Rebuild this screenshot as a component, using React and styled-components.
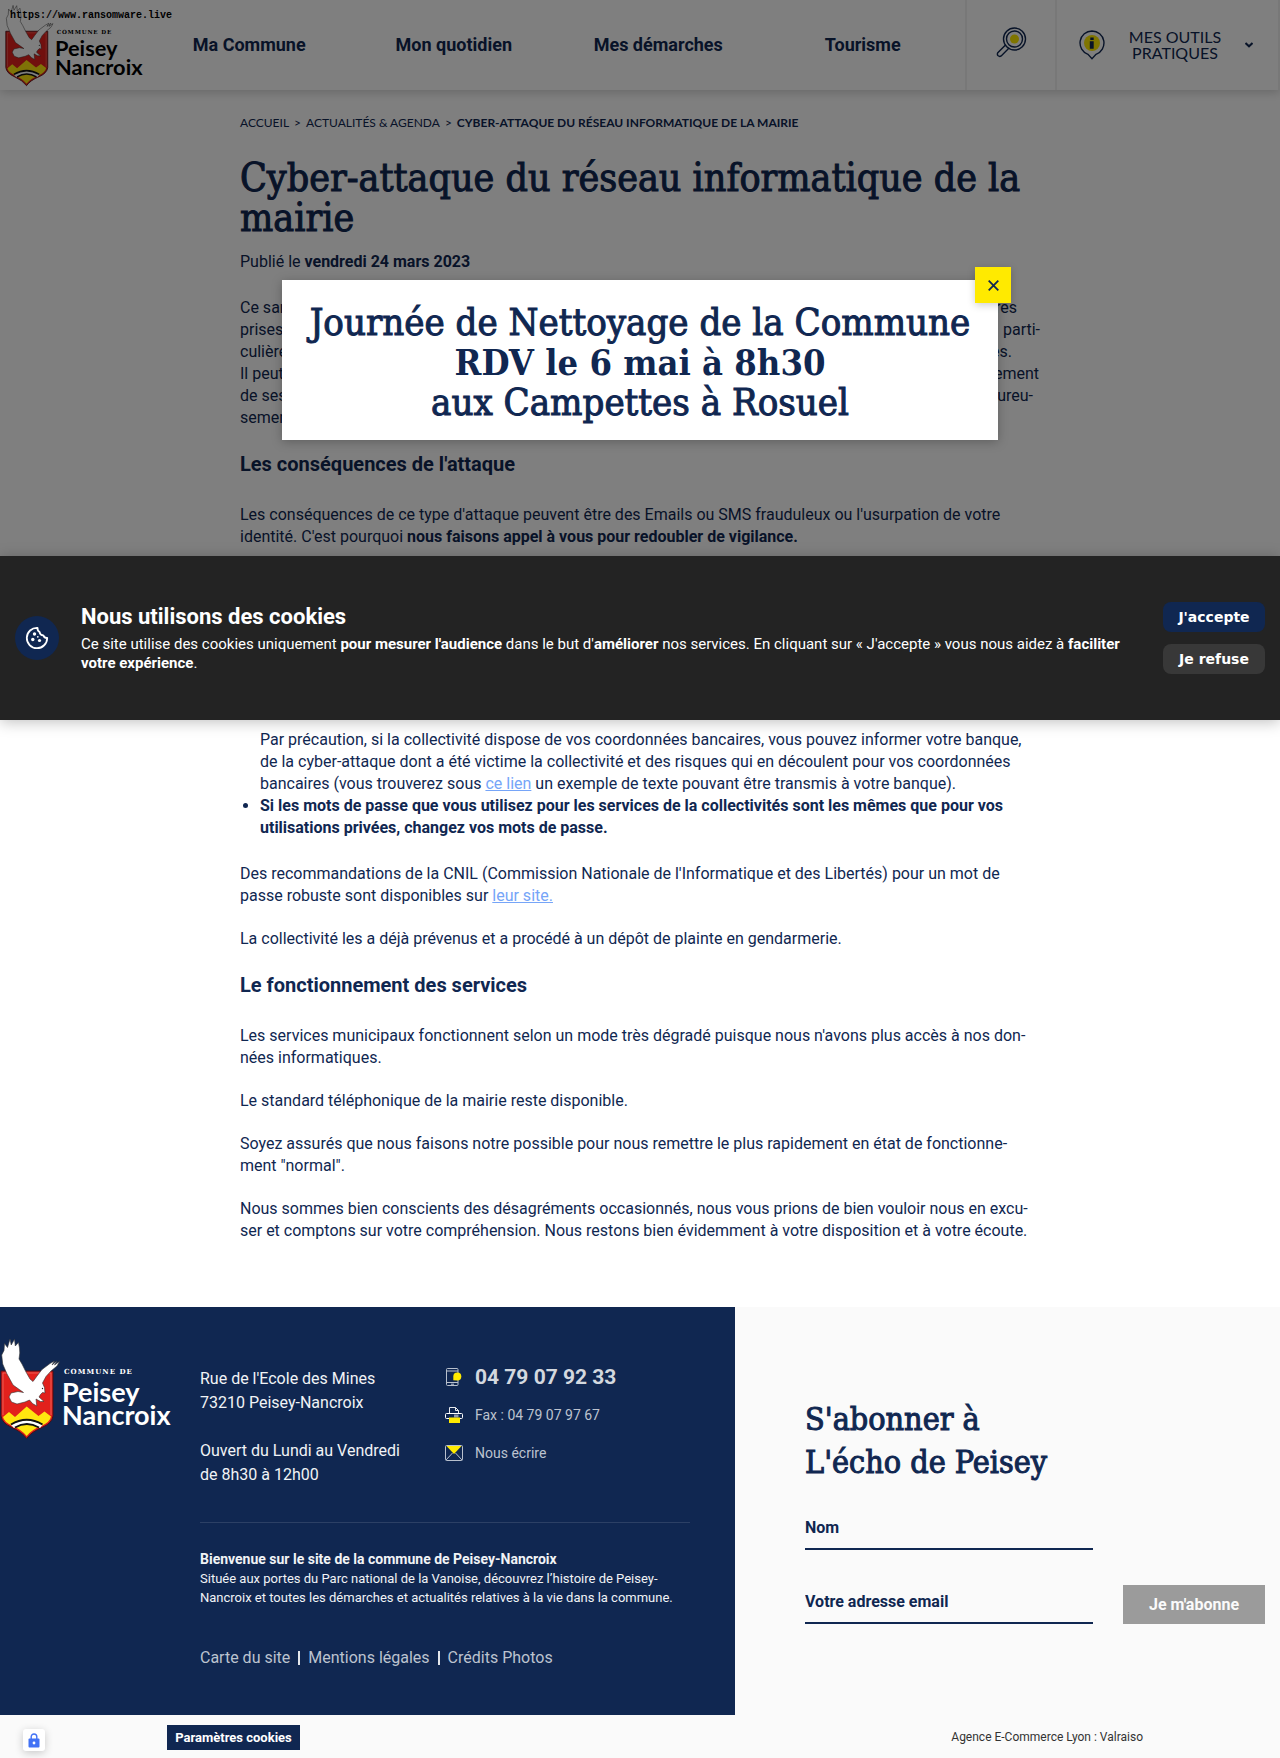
import React from "react";
import styled, { createGlobalStyle } from "styled-components";

const navy = "#102751";
const yellow = "#ffea00";
const sans = `Roboto, "Liberation Sans", sans-serif`;
const caps = `Lato, "Liberation Sans", sans-serif`;
const slab = `"DejaVu Serif Condensed", "DejaVu Serif", serif`;

const GlobalStyle = createGlobalStyle`
  *, *::before, *::after { box-sizing: border-box; }
  body {
    margin: 0;
    background: #fff;
    color: ${navy};
    font-family: ${sans};
    font-size: 16px;
    line-height: 22px;
  }
  h1, h2, h3, p, ul { margin: 0; padding: 0; }
  button, input { font-family: inherit; border: 0; margin: 0; padding: 0; }
  button { cursor: pointer; }
  a { color: inherit; text-decoration: none; }
`;

const Page = styled.div`
  position: relative;
`;

/* Header */

const Header = styled.header`
  display: flex;
  height: 90px;
  background: #fff;
  box-shadow: 0 2px 10px rgba(0, 0, 0, 0.2);
`;

const Brand = styled.a`
  flex: 0 0 145px;
  padding: 3px 0 0 5px;
`;

const Nav = styled.nav`
  flex: 1;
  display: grid;
  grid-template-columns: repeat(4, 1fr);
`;

const NavLink = styled.a`
  display: flex;
  align-items: center;
  justify-content: center;
  font-size: 18px;
  font-weight: 700;
`;

const SearchButton = styled.button`
  width: 90px;
  display: flex;
  align-items: center;
  justify-content: center;
  background: none;
  border-left: 2px solid #f0f0f0;
  padding-bottom: 6px;
`;

const ToolsButton = styled.button`
  width: 225px;
  display: flex;
  align-items: center;
  justify-content: space-between;
  padding: 0 25px 0 22px;
  background: none;
  border-left: 2px solid #f0f0f0;
  border-right: 2px solid #f0f0f0;
  color: ${navy};
  font-family: ${caps};
  font-size: 16px;
  line-height: 16px;
`;

/* Article */

const Article = styled.main`
  max-width: 800px;
  margin: 0 auto;
  padding: 25px 0 65px;
`;

const Breadcrumb = styled.nav`
  display: flex;
  gap: 5px;
  font-family: ${caps};
  font-size: 12px;
  line-height: 16px;
`;

const Title = styled.h1`
  margin-top: 27px;
  font-family: ${slab};
  font-size: 39px;
  font-weight: 400;
  line-height: 40px;
  -webkit-text-stroke: 1px currentColor;
`;

const Published = styled.p`
  margin: 13px 0 24px;
`;

const Paragraph = styled.p`
  & + & { margin-top: 21px; }
  ul + & { margin-top: 24px; }
`;

const SplitLine = styled.span`
  display: flex;
  justify-content: space-between;
  max-width: ${(p) => p.$width}px;
`;

const Heading = styled.h3`
  margin: 21px 0 26px;
  font-size: 20px;
  font-weight: 700;
  line-height: 28px;
`;

const List = styled.ul`
  margin-top: 181px;
  padding-left: 20px;
`;

const Item = styled.li`
  list-style: ${(p) => (p.$plain ? "none" : "disc")};
`;

const TextLink = styled.a`
  color: #76a5f8;
  text-decoration: underline;
`;

/* Footer */

const Footer = styled.footer`
  background: #fafafa;
`;

const FooterMain = styled.div`
  display: grid;
  grid-template-columns: minmax(0, 735fr) minmax(0, 545fr);
`;

const About = styled.section`
  display: flex;
  background: ${navy};
  color: #f1f3f6;
  padding: 29px 45px 0 0;
`;

const FooterBrand = styled.a`
  flex: 0 0 200px;
`;

const AboutBody = styled.div`
  flex: 1;
  padding: 22px 0 46px;
`;

const Contact = styled.div`
  display: grid;
  grid-template-columns: 245px 1fr;
  padding-bottom: 35px;
  border-bottom: 1px solid #2c4065;
`;

const Address = styled.p`
  padding-top: 9px;
  line-height: 24px;
`;

const ContactList = styled.div`
  display: flex;
  flex-direction: column;
`;

const ContactLink = styled.a`
  height: 38px;
  display: flex;
  align-items: center;
  gap: 12px;
  color: ${(p) => (p.$strong ? "#d3d8df" : "#bcc3cf")};
  font-size: ${(p) => (p.$strong ? 21 : 14)}px;
  font-weight: ${(p) => (p.$strong ? 700 : 400)};
`;

const Welcome = styled.p`
  margin-top: 26px;
  font-size: 13px;
  line-height: 19px;
`;

const WelcomeTitle = styled.strong`
  display: block;
  font-size: 14px;
  line-height: 20px;
`;

const LegalLinks = styled.nav`
  display: flex;
  align-items: center;
  gap: 8px;
  margin-top: 40px;
  color: #bcc3cf;
`;

const Divider = styled.span`
  width: 2px;
  height: 14px;
  background: #e3e6eb;
`;

const Newsletter = styled.section`
  padding: 91px 15px 0 70px;
`;

const NewsletterTitle = styled.h2`
  font-family: ${slab};
  font-size: 32px;
  font-weight: 400;
  line-height: 43px;
  -webkit-text-stroke: 1px currentColor;
`;

const Form = styled.form`
  display: flex;
  align-items: flex-end;
  gap: 30px;
  margin-top: 26px;
`;

const Fields = styled.div`
  flex: 1;
  display: flex;
  flex-direction: column;
  gap: 34px;
`;

const Field = styled.input`
  width: 100%;
  height: 40px;
  padding-bottom: 4px;
  background: none;
  border-bottom: 2px solid ${navy};
  color: ${navy};
  font-size: 16px;
  font-weight: 700;
  &::placeholder { color: ${navy}; opacity: 1; }
`;

const Subscribe = styled.button`
  width: 142px;
  height: 39px;
  background: #9b9b9b;
  color: #fafafa;
  font-size: 16px;
  font-weight: 700;
`;

const BottomBar = styled.div`
  position: relative;
  display: flex;
  align-items: center;
  justify-content: space-between;
  height: 44px;
  padding: 0 137px 0 167px;
  color: #333;
  font-size: 12px;
`;

const CookieSettings = styled.button`
  width: 133px;
  height: 25px;
  background: ${navy};
  color: #fff;
  font-size: 13px;
  font-weight: 700;
`;

const LockBadge = styled.button`
  position: absolute;
  left: 23px;
  bottom: 8px;
  width: 22px;
  height: 22px;
  display: flex;
  align-items: center;
  justify-content: center;
  border-radius: 3px;
  background: #fff;
  box-shadow: 0 2px 8px rgba(0, 0, 0, 0.2);
`;

/* Layers over the page */

const Overlay = styled.div`
  position: absolute;
  top: 0;
  left: 0;
  right: 0;
  height: 720px;
  display: flex;
  align-items: center;
  justify-content: center;
  background: rgba(0, 0, 0, 0.5);
`;

const Modal = styled.section`
  position: relative;
  width: 716px;
  max-width: 90%;
  padding: 22px 0 18px;
  background: #fff;
  box-shadow: 0 2px 10px rgba(0, 0, 0, 0.25);
  text-align: center;
`;

const ModalText = styled.h2`
  font-family: ${slab};
  font-size: 38px;
  font-weight: 400;
  line-height: 40px;
  -webkit-text-stroke: 1px currentColor;
`;

const ModalStrong = styled.strong`
  font-size: 36px;
  line-height: 36px;
  -webkit-text-stroke: 0;
`;

const CloseButton = styled.button`
  position: absolute;
  top: -13px;
  right: -13px;
  width: 36px;
  height: 36px;
  display: flex;
  align-items: center;
  justify-content: center;
  background: ${yellow};
  box-shadow: 0 2px 8px rgba(0, 0, 0, 0.2);
`;

const CookieBar = styled.section`
  position: absolute;
  left: 0;
  right: 0;
  bottom: 0;
  height: 164px;
  display: flex;
  align-items: center;
  gap: 22px;
  padding: 0 15px;
  background: #232323;
  color: #fff;
  box-shadow: 0 2px 14px rgba(0, 0, 0, 0.25);
`;

const CookieIcon = styled.span`
  flex: 0 0 44px;
  height: 44px;
  display: flex;
  align-items: center;
  justify-content: center;
  border-radius: 50%;
  background: ${navy};
`;

const CookieText = styled.div`
  flex: 1;
  font-size: 15px;
  line-height: 19px;
`;

const CookieTitle = styled.h2`
  margin-bottom: 4px;
  font-size: 22px;
  font-weight: 700;
  line-height: 28px;
`;

const CookieActions = styled.div`
  display: flex;
  flex-direction: column;
  gap: 12px;
`;

const CookieButton = styled.button`
  width: 102px;
  height: 30px;
  border-radius: 8px;
  background: ${(p) => (p.$primary ? navy : "#383838")};
  color: #fff;
  font-family: "DejaVu Sans", sans-serif;
  font-size: 14px;
  font-weight: 700;
`;

const Watermark = styled.span`
  position: absolute;
  top: 9px;
  left: 10px;
  color: #000;
  font-family: "Liberation Mono", monospace;
  font-size: 10px;
  font-weight: 700;
  line-height: 14px;
`;

function Logo({ width, color }) {
  return (
    <svg width={width} viewBox="0 0 176 104" role="img" aria-label="Commune de Peisey Nancroix">
      <path
        d="M1 35H53V80Q52 87 43 91Q31 96 26.700 102.500Q22 96 11 91Q2 87 1 80Z"
        fill="#e2211c"
        stroke="#4a0f14"
        strokeWidth="1"
      />
      <path d="M3 79V37H51V79" fill="none" stroke="#ee6d63" strokeWidth="0.800" />
      <path
        d="M3 81L9 76L15 81L26.700 70.500L38.500 80L44.500 75.500L51 80.500Q50 86 42 89.500Q31 94 26.700 100Q22 94 12 89.500Q4 86 3 81Z"
        fill="#ffe60f"
      />
      <path d="M11 89Q26.700 79.500 42.500 89L40 92Q26.700 84 14 92Z" fill="#fff" />
      <path d="M11 88.500Q26.700 79 42.500 88.500" fill="none" stroke="#111" strokeWidth="2" />
      <path d="M15 91.500Q26.700 84.500 39 91.500" fill="none" stroke="#111" strokeWidth="1.800" />
      <path
        d="M10 3L11.200 9L14.500 3.300L15.300 10L18.500 6.500L19.500 12L19.800 17L19 23L22 28L26 36L30 43L33 45.500L37 40L42 33.500L50 27.500L54.500 25L52 29L57 25L54.500 29L59.500 25.500L57 30L51 35L46 40.500L42.500 47L44.500 51.500L45 57L42.500 56.500L40.500 58.500L39 61L44 65.500L40.500 65.500L36 63L36.800 70L32.500 67.500L29.500 64L25 66L17 68L11.500 66L9 61L11 57L18 55.500L23.500 56.500L20 54L13 49L7 38L2.700 28L1.700 19L4 14.500L4.500 7.500L7.500 11.500Z"
        fill="#fff"
        stroke="#333"
        strokeWidth="0.600"
        strokeLinejoin="round"
      />
      <circle cx="42.500" cy="52.500" r="0.700" fill="#222" />
      <text x="64" y="38" fill={color} fontFamily="DejaVu Serif" fontSize="7" fontWeight="700" letterSpacing="1">
        COMMUNE DE
      </text>
      <text x="62" y="66" fill={color} fontFamily="Lato" fontSize="27" fontWeight="700">
        Peisey
      </text>
      <text x="62" y="89" fill={color} fontFamily="Lato" fontSize="27" fontWeight="700">
        Nancroix
      </text>
    </svg>
  );
}

const SearchIcon = () => (
  <svg width="31" height="31" viewBox="0 0 31 31" fill="none" stroke={navy} strokeWidth="1.400">
    <circle cx="18.500" cy="12" r="11" />
    <circle cx="18.500" cy="12" r="8" />
    <circle cx="18.500" cy="12" r="4.500" fill={yellow} stroke="none" />
    <path d="M9.500 18L1.800 25.700Q0.800 27.500 2.200 28.800Q3.600 30 5.200 28.900L12.800 21.300" />
  </svg>
);

const InfoIcon = () => (
  <svg width="26" height="30" viewBox="0 0 26 30">
    <path d="M13 1A12 12 0 0 0 9 24.300L13 28.800L17 24.300A12 12 0 0 0 13 1Z" fill="none" stroke={navy} strokeWidth="1.400" />
    <circle cx="13" cy="13" r="8" fill={yellow} />
    <path d="M11.300 7.500h3.400v2.400h-3.400zM10.800 11.200h3.900v7.500h-3.900z" fill={navy} />
  </svg>
);

const Chevron = () => (
  <svg width="8" height="6" viewBox="0 0 8 6" fill="none" stroke={navy} strokeWidth="2">
    <path d="M0.500 1L4 4.300L7.500 1" />
  </svg>
);

const CloseIcon = () => (
  <svg width="11" height="11" viewBox="0 0 11 11" stroke={navy} strokeWidth="1.800">
    <path d="M0.700 0.700L10.300 10.300M10.300 0.700L0.700 10.300" />
  </svg>
);

const CookieGlyph = () => (
  <svg width="24" height="24" viewBox="0 0 24 24" fill="none" stroke="#fff" strokeWidth="1.800" strokeLinejoin="round">
    <path d="M12.500 1.800A10.200 10.200 0 1 0 22.200 12Q19.500 12.300 18.300 9.300Q14.800 9.300 14.600 6Q12.300 4.800 12.500 1.800Z" />
    <g fill="#fff" stroke="none">
      <circle cx="9.500" cy="8" r="1.700" />
      <circle cx="7.800" cy="13.500" r="1.700" />
      <circle cx="14.500" cy="14.500" r="1.600" />
      <circle cx="12.800" cy="10.800" r="0.900" />
    </g>
  </svg>
);

const PhoneIcon = () => (
  <svg width="18" height="18" viewBox="0 0 18 18">
    <rect x="1.500" y="0.500" width="11.500" height="17" rx="1" fill="none" stroke="#b8c0cd" />
    <path d="M1.500 3H13M1.500 14.500H13M6 16.200h3" stroke="#b8c0cd" />
    <path d="M8.300 12.300V8.500A4 4 0 1 1 12.300 12.500Z" fill={yellow} />
  </svg>
);

const PrinterIcon = () => (
  <svg width="18" height="18" viewBox="0 0 18 18">
    <path d="M4.500 8V1.500H10.500L13.500 4.500V8M10.500 1.500V4.500H13.500" fill="none" stroke="#e5e8ed" />
    <rect x="0.500" y="7.500" width="17" height="5" rx="1" fill="none" stroke="#fff" />
    <path d="M9 8.500h4.500v3H9z" fill="#8e99ad" />
    <path d="M4 11.500H15V17H4z" fill={yellow} />
  </svg>
);

const MailIcon = () => (
  <svg width="18" height="18" viewBox="0 0 18 18">
    <rect x="0.500" y="1.500" width="17" height="15" rx="1" fill="none" stroke="#b8c0cd" />
    <path d="M1 16L7.500 9M17 16L10.500 9" stroke="#b8c0cd" />
    <path d="M1.500 2H16.500L9 10Z" fill={yellow} />
  </svg>
);

const LockIcon = () => (
  <svg width="12" height="15" viewBox="0 0 12 15">
    <path d="M3.200 6V3.800a2.800 2.800 0 0 1 5.600 0V6" fill="none" stroke="#4272f5" strokeWidth="1.400" />
    <rect x="0.500" y="5.500" width="11" height="9" rx="1" fill="#4272f5" />
    <circle cx="6" cy="10" r="1.400" fill="#fff" />
  </svg>
);

const nav = ["Ma Commune", "Mon quotidien", "Mes démarches", "Tourisme"];

export default function App() {
  return (
    <Page>
      <GlobalStyle />
      <Header>
        <Brand href="#">
          <Logo width={142} color="#000" />
        </Brand>
        <Nav aria-label="Navigation principale">
          {nav.map((label) => (
            <NavLink href="#" key={label}>{label}</NavLink>
          ))}
        </Nav>
        <SearchButton aria-label="Rechercher"><SearchIcon /></SearchButton>
        <ToolsButton>
          <InfoIcon />
          <span>MES OUTILS<br />PRATIQUES</span>
          <Chevron />
        </ToolsButton>
      </Header>

      <Article>
        <Breadcrumb aria-label="Fil d'Ariane">
          <a href="#">ACCUEIL</a>
          <span>&gt;</span>
          <a href="#">ACTUALITÉS &amp; AGENDA</a>
          <span>&gt;</span>
          <strong>CYBER-ATTAQUE DU RÉSEAU INFORMATIQUE DE LA MAIRIE</strong>
        </Breadcrumb>
        <Title>Cyber-attaque du réseau informatique de la mairie</Title>
        <Published>Publié le <strong>vendredi 24 mars 2023</strong></Published>

        <Paragraph>
          <SplitLine $width={777}><span>Ce samedi</span><span>mesures</span></SplitLine>
          <SplitLine $width={800}><span>prises</span><span>parti-</span></SplitLine>
          <SplitLine $width={772}><span>culières</span><span>données.</span></SplitLine>
          <SplitLine $width={799}><span>Il peut</span><span>seulement</span></SplitLine>
          <SplitLine $width={793}><span>de ses</span><span>malheureu-</span></SplitLine>
          <SplitLine $width={800}><span>sement</span></SplitLine>
        </Paragraph>

        <Heading>Les conséquences de l'attaque</Heading>
        <Paragraph>
          Les conséquences de ce type d'attaque peuvent être des Emails ou SMS frauduleux ou l'usurpation de votre
          <br />
          identité. C'est pourquoi <strong>nous faisons appel à vous pour redoubler de vigilance.</strong>
        </Paragraph>

        <List>
          <Item $plain>
            Par précaution, si la collectivité dispose de vos coordonnées bancaires, vous pouvez informer votre banque,
            <br />
            de la cyber-attaque dont a été victime la collectivité et des risques qui en découlent pour vos coordonnées
            <br />
            bancaires (vous trouverez sous <TextLink href="#">ce lien</TextLink> un exemple de texte pouvant être
            transmis à votre banque).
          </Item>
          <Item>
            <strong>
              Si les mots de passe que vous utilisez pour les services de la collectivités sont les mêmes que pour vos
              <br />
              utilisations privées, changez vos mots de passe.
            </strong>
          </Item>
        </List>

        <Paragraph>
          Des recommandations de la CNIL (Commission Nationale de l'Informatique et des Libertés) pour un mot de
          <br />
          passe robuste sont disponibles sur <TextLink href="#">leur site.</TextLink>
        </Paragraph>
        <Paragraph>La collectivité les a déjà prévenus et a procédé à un dépôt de plainte en gendarmerie.</Paragraph>

        <Heading>Le fonctionnement des services</Heading>
        <Paragraph>
          Les services municipaux fonctionnent selon un mode très dégradé puisque nous n'avons plus accès à nos don-
          <br />
          nées informatiques.
        </Paragraph>
        <Paragraph>Le standard téléphonique de la mairie reste disponible.</Paragraph>
        <Paragraph>
          Soyez assurés que nous faisons notre possible pour nous remettre le plus rapidement en état de fonctionne-
          <br />
          ment "normal".
        </Paragraph>
        <Paragraph>
          Nous sommes bien conscients des désagréments occasionnés, nous vous prions de bien vouloir nous en excu-
          <br />
          ser et comptons sur votre compréhension. Nous restons bien évidemment à votre disposition et à votre écoute.
        </Paragraph>
      </Article>

      <Footer>
        <FooterMain>
          <About>
            <FooterBrand href="#">
              <Logo width={176} color="#fff" />
            </FooterBrand>
            <AboutBody>
              <Contact>
                <Address>
                  Rue de l'Ecole des Mines<br />
                  73210 Peisey-Nancroix<br />
                  <br />
                  Ouvert du Lundi au Vendredi<br />
                  de 8h30 à 12h00
                </Address>
                <ContactList>
                  <ContactLink href="#" $strong><PhoneIcon />04 79 07 92 33</ContactLink>
                  <ContactLink href="#"><PrinterIcon />Fax : 04 79 07 97 67</ContactLink>
                  <ContactLink href="#"><MailIcon />Nous écrire</ContactLink>
                </ContactList>
              </Contact>
              <Welcome>
                <WelcomeTitle>Bienvenue sur le site de la commune de Peisey-Nancroix</WelcomeTitle>
                Située aux portes du Parc national de la Vanoise, découvrez l’histoire de Peisey-
                <br />
                Nancroix et toutes les démarches et actualités relatives à la vie dans la commune.
              </Welcome>
              <LegalLinks aria-label="Liens légaux">
                <a href="#">Carte du site</a>
                <Divider />
                <a href="#">Mentions légales</a>
                <Divider />
                <a href="#">Crédits Photos</a>
              </LegalLinks>
            </AboutBody>
          </About>
          <Newsletter>
            <NewsletterTitle>S'abonner à<br />L'écho de Peisey</NewsletterTitle>
            <Form>
              <Fields>
                <Field type="text" placeholder="Nom" aria-label="Nom" />
                <Field type="email" placeholder="Votre adresse email" aria-label="Votre adresse email" />
              </Fields>
              <Subscribe type="button">Je m'abonne</Subscribe>
            </Form>
          </Newsletter>
        </FooterMain>
        <BottomBar>
          <LockBadge aria-label="Confidentialité"><LockIcon /></LockBadge>
          <CookieSettings>Paramètres cookies</CookieSettings>
          <a href="#">Agence E-Commerce Lyon : Valraiso</a>
        </BottomBar>
      </Footer>

      <Overlay>
        <Modal role="dialog" aria-label="Annonce">
          <ModalText>
            Journée de Nettoyage de la Commune
            <br />
            <ModalStrong>RDV le 6 mai à 8h30</ModalStrong>
            <br />
            aux Campettes à Rosuel
          </ModalText>
          <CloseButton aria-label="Fermer"><CloseIcon /></CloseButton>
        </Modal>
        <CookieBar>
          <CookieIcon><CookieGlyph /></CookieIcon>
          <CookieText>
            <CookieTitle>Nous utilisons des cookies</CookieTitle>
            <p>
              Ce site utilise des cookies uniquement <strong>pour mesurer l'audience</strong> dans le but
              d'<strong>améliorer</strong> nos services. En cliquant sur « J'accepte » vous nous aidez à{" "}
              <strong>faciliter<br />votre expérience</strong>.
            </p>
          </CookieText>
          <CookieActions>
            <CookieButton $primary>J'accepte</CookieButton>
            <CookieButton>Je refuse</CookieButton>
          </CookieActions>
        </CookieBar>
      </Overlay>
      <Watermark>https://www.ransomware.live</Watermark>
    </Page>
  );
}
